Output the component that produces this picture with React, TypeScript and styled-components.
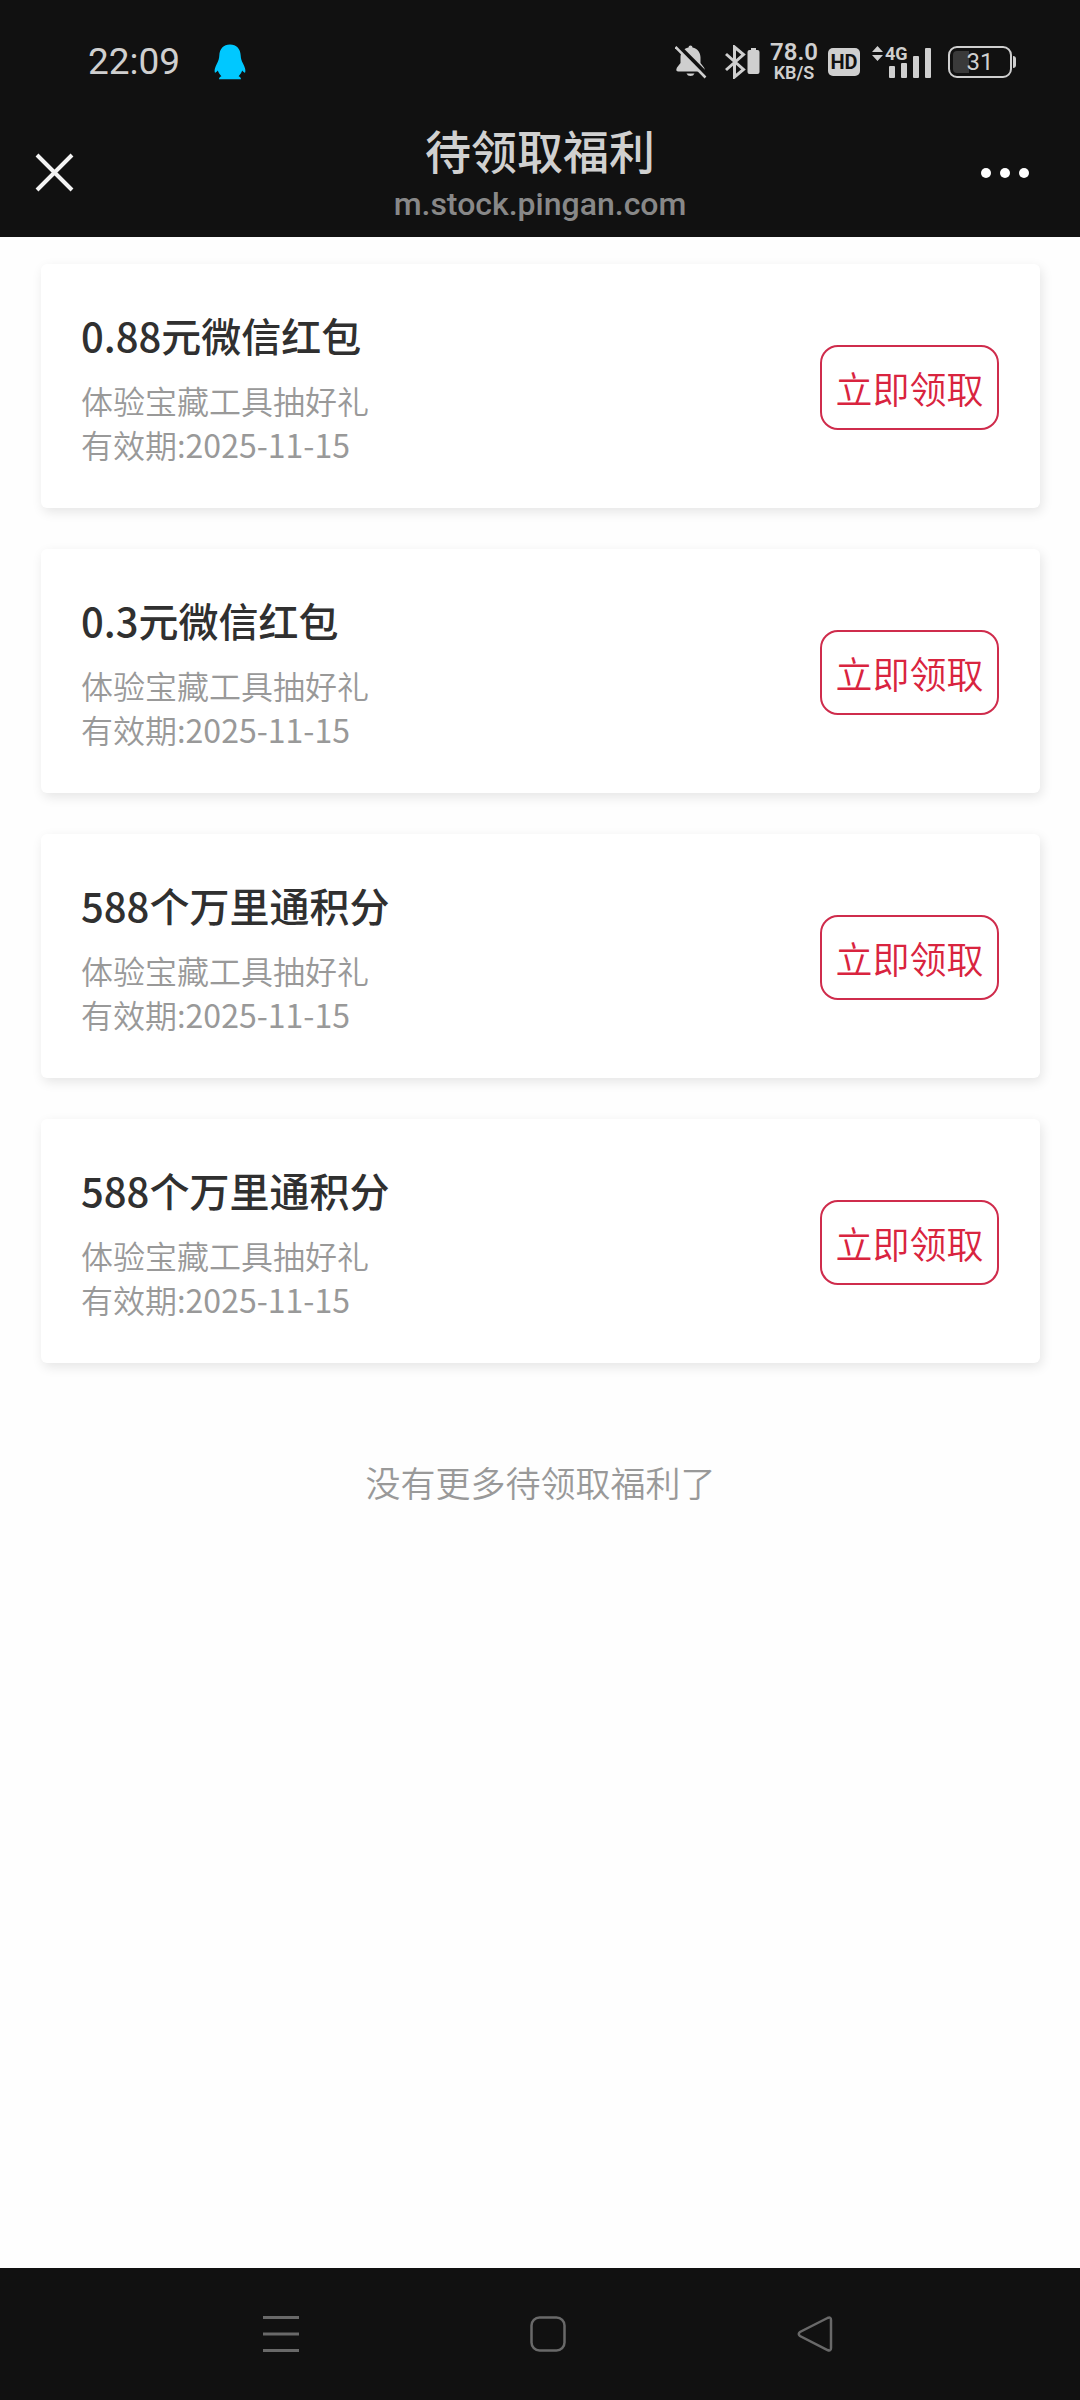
import React from "react";
import styled, { createGlobalStyle } from "styled-components";

const cjk = `"Noto Sans CJK SC", "Noto Sans", sans-serif`;

const GlobalStyle = createGlobalStyle`
  * { box-sizing: border-box; }
  body { margin: 0; background: #fefefe; font-family: ${cjk}; }
  h1, h2, p, ul { margin: 0; padding: 0; font-weight: 400; }
  button { margin: 0; padding: 0; border: 0; background: none; font: inherit; color: inherit; }
  svg { display: block; flex: none; }
`;

const Page = styled.div`
  min-height: 100vh;
  display: flex;
  flex-direction: column;
`;

const StatusBar = styled.div`
  display: flex;
  align-items: center;
  height: 108px;
  padding: 16px 64px 0 88px;
  background: #111;
  color: #cfcfcf;
`;

const Clock = styled.time`
  font: 400 37px/44px Roboto, sans-serif;
  margin-right: 34px;
`;

const StatusIcons = styled.div`
  display: flex;
  align-items: center;
  gap: 12px;
  margin-left: auto;
`;

const BellSlot = styled.span`
  margin-right: 6px;
`;

const Speed = styled.div`
  display: flex;
  flex-direction: column;
  align-items: center;
  width: 44px;
  font-family: Roboto, sans-serif;
`;

const SpeedValue = styled.span`
  font-size: 24px;
  font-weight: 600;
  line-height: 22px;
`;

const SpeedUnit = styled.span`
  font-size: 18px;
  font-weight: 600;
  line-height: 20px;
`;

const HdBadge = styled.span`
  width: 32px;
  height: 28px;
  border-radius: 5px;
  background: #cfcfcf;
  color: #111;
  font: 700 20px/28px Roboto, sans-serif;
  text-align: center;
`;

const Signal = styled.div`
  position: relative;
`;

const Network = styled.span`
  position: absolute;
  left: 13px;
  top: -1px;
  font: 700 18px/18px Roboto, sans-serif;
`;

const Battery = styled.div`
  position: relative;
  display: flex;
  align-items: center;
  justify-content: center;
  width: 64px;
  height: 32px;
  margin: 0 4px;
  border: 2px solid #cfcfcf;
  border-radius: 9px;
  font: 400 24px/28px Roboto, sans-serif;

  &::before {
    content: "";
    position: absolute;
    left: 3px;
    top: 3px;
    bottom: 3px;
    width: 16px;
    border-radius: 4px 0 0 4px;
    background: #3a3a3a;
  }

  &::after {
    content: "";
    position: absolute;
    right: -6px;
    top: 8px;
    width: 3px;
    height: 12px;
    border-radius: 0 3px 3px 0;
    background: #cfcfcf;
  }
`;

const BatteryLevel = styled.span`
  position: relative;
`;

const TitleBar = styled.header`
  display: grid;
  grid-template-columns: 112px 1fr 112px;
  align-items: center;
  height: 129px;
  background: #111;
  color: #fff;
`;

const BarButton = styled.button<{ $end?: boolean }>`
  display: flex;
  justify-content: ${(p) => (p.$end ? "flex-end" : "flex-start")};
  padding: 24px 32px;
`;

const Heading = styled.div`
  text-align: center;
`;

const PageTitle = styled.h1`
  margin-bottom: 7px;
  color: #d0d0d0;
  font-size: 46px;
  font-weight: 500;
  line-height: 56px;
`;

const Host = styled.p`
  color: #888;
  font: 500 32px/40px Roboto, sans-serif;
`;

const Content = styled.main`
  flex: 1;
  padding: 27px 40px 0 41px;
`;

const RewardList = styled.ul`
  display: flex;
  flex-direction: column;
  gap: 41px;
  list-style: none;
`;

const RewardCard = styled.li`
  display: flex;
  align-items: center;
  justify-content: space-between;
  height: 244px;
  padding: 0 41px 0 40px;
  border-radius: 6px;
  background: #fff;
  box-shadow: 2px 4px 12px rgba(0, 0, 0, 0.1);
`;

const RewardTitle = styled.h2`
  margin-bottom: 14px;
  color: #303030;
  font-size: 40px;
  font-weight: 500;
  line-height: 58px;
`;

const RewardNote = styled.p`
  color: #999;
  font-size: 32px;
  font-weight: 350;
  line-height: 44px;
`;

const ExpiryDate = styled.time`
  font-weight: 400;
`;

const ClaimButton = styled.button`
  width: 179px;
  height: 85px;
  margin-top: 3px;
  border: 2px solid #cf2c4c;
  border-radius: 18px;
  color: #d9243f;
  font-size: 37px;
  font-weight: 350;
  line-height: 56px;
`;

const EndNote = styled.p`
  margin-top: 93px;
  color: #999;
  font-size: 35px;
  font-weight: 350;
  line-height: 52px;
  text-align: center;
`;

const NavBar = styled.nav`
  display: grid;
  grid-template-columns: repeat(3, 1fr);
  height: 132px;
  padding: 0 132px 0 148px;
  background: #111;
  color: #696969;
`;

const NavButton = styled.button`
  display: flex;
  align-items: center;
  justify-content: center;
`;

const rewards = [
  { title: "0.88元微信红包", date: "2025-11-15" },
  { title: "0.3元微信红包", date: "2025-11-15" },
  { title: "588个万里通积分", date: "2025-11-15" },
  { title: "588个万里通积分", date: "2025-11-15" },
];

const Penguin = () => (
  <svg width="32" height="36" viewBox="0 0 32 36" fill="#00c8ff">
    <path d="M16 0.5C9.500 0.500 5.500 5 5.300 11.500C5.200 14.500 4.500 16.500 3 19.500C1.200 23 0.300 25.500 0.700 28C1 29.300 2 28.500 3.800 26.500C4.500 28.500 5.700 30.500 7.400 32.200C5.800 33 5 33.800 5 35.200H27C27 33.800 26.200 33 24.600 32.200C26.300 30.500 27.500 28.500 28.200 26.500C30 28.500 31 29.300 31.300 28C31.700 25.500 30.800 23 29 19.500C27.500 16.500 26.800 14.500 26.700 11.500C26.500 5 22.500 0.500 16 0.500Z" />
  </svg>
);

const MutedBell = () => (
  <svg width="32" height="34" viewBox="0 0 32 34">
    <g fill="#cfcfcf">
      <path d="M13.500 2.500Q13.500 0.500 15.500 0.500T17.500 2.500C22.500 3.500 25.500 7.500 25.500 12.500V18L29 22.500Q31 26.500 28 26.500H3.500Q0 26.500 2 22.500L5.500 18V12.500C5.500 7.500 8.500 3.500 13.500 2.500Z" />
      <path d="M11.500 28.500H19.500Q18.500 31 15.500 31T11.500 28.500Z" />
    </g>
    <path d="M2.500 0L32 29.500" stroke="#111" strokeWidth="4" />
    <path d="M0.500 2L30.500 32.500" stroke="#cfcfcf" strokeWidth="2.500" />
  </svg>
);

const Bluetooth = () => (
  <svg width="35" height="34" viewBox="0 0 35 34">
    <path
      d="M1 9L18.500 24.500L9.500 32V2L18.500 9.500L1 25"
      fill="none"
      stroke="#cfcfcf"
      strokeWidth="3"
    />
    <path d="M26 3h5v2h1.500q2 0 2 2v20q0 2-2 2h-8q-2 0-2-2V7q0-2 2-2H26z" fill="#cfcfcf" />
  </svg>
);

const SignalBars = () => (
  <svg width="60" height="32" viewBox="0 0 60 32" fill="#cfcfcf">
    <path d="M5.500 0L11 6H0ZM5.500 15L11 9H0Z" />
    <rect x="17" y="20" width="6" height="12" rx="1" />
    <rect x="29" y="17" width="6" height="15" rx="1" />
    <rect x="41" y="10" width="6" height="22" rx="1" />
    <rect x="53" y="2" width="6" height="30" rx="1" />
  </svg>
);

export default function App() {
  return (
    <Page>
      <GlobalStyle />
      <StatusBar>
        <Clock>22:09</Clock>
        <Penguin />
        <StatusIcons>
          <BellSlot>
            <MutedBell />
          </BellSlot>
          <Bluetooth />
          <Speed>
            <SpeedValue>78.0</SpeedValue>
            <SpeedUnit>KB/S</SpeedUnit>
          </Speed>
          <HdBadge>HD</HdBadge>
          <Signal>
            <SignalBars />
            <Network>4G</Network>
          </Signal>
          <Battery>
            <BatteryLevel>31</BatteryLevel>
          </Battery>
        </StatusIcons>
      </StatusBar>

      <TitleBar>
        <BarButton aria-label="关闭">
          <svg width="44" height="44" viewBox="0 0 44 44">
            <path d="M5 4L40 39M40 4L5 39" stroke="#f4f4f4" strokeWidth="4" />
          </svg>
        </BarButton>
        <Heading>
          <PageTitle>待领取福利</PageTitle>
          <Host>m.stock.pingan.com</Host>
        </Heading>
        <BarButton $end aria-label="更多">
          <svg width="68" height="12" viewBox="0 0 68 12" fill="#fff">
            <circle cx="6" cy="6" r="5" />
            <circle cx="25" cy="6" r="5" />
            <circle cx="44" cy="6" r="5" />
          </svg>
        </BarButton>
      </TitleBar>

      <Content>
        <RewardList>
          {rewards.map((reward, i) => (
            <RewardCard key={i}>
              <div>
                <RewardTitle>{reward.title}</RewardTitle>
                <RewardNote>体验宝藏工具抽好礼</RewardNote>
                <RewardNote>
                  有效期:<ExpiryDate dateTime={reward.date}>{reward.date}</ExpiryDate>
                </RewardNote>
              </div>
              <ClaimButton>立即领取</ClaimButton>
            </RewardCard>
          ))}
        </RewardList>
        <EndNote>没有更多待领取福利了</EndNote>
      </Content>

      <NavBar>
        <NavButton aria-label="最近任务">
          <svg width="36" height="36" viewBox="0 0 36 36" stroke="currentColor" strokeWidth="3">
            <path d="M0 1.500H36M0 18H36M0 34.500H36" />
          </svg>
        </NavButton>
        <NavButton aria-label="主屏幕">
          <svg width="36" height="36" viewBox="0 0 36 36" fill="none" stroke="currentColor" strokeWidth="2.500">
            <rect x="1.500" y="1.500" width="33" height="33" rx="8" />
          </svg>
        </NavButton>
        <NavButton aria-label="返回">
          <svg width="36" height="36" viewBox="0 0 36 36" fill="none" stroke="currentColor" strokeWidth="2.500">
            <path d="M30.500 2L3 16Q0.500 18 3 20L30.500 34Q34 35.500 34 32V4Q34 0.500 30.500 2Z" />
          </svg>
        </NavButton>
      </NavBar>
    </Page>
  );
}
